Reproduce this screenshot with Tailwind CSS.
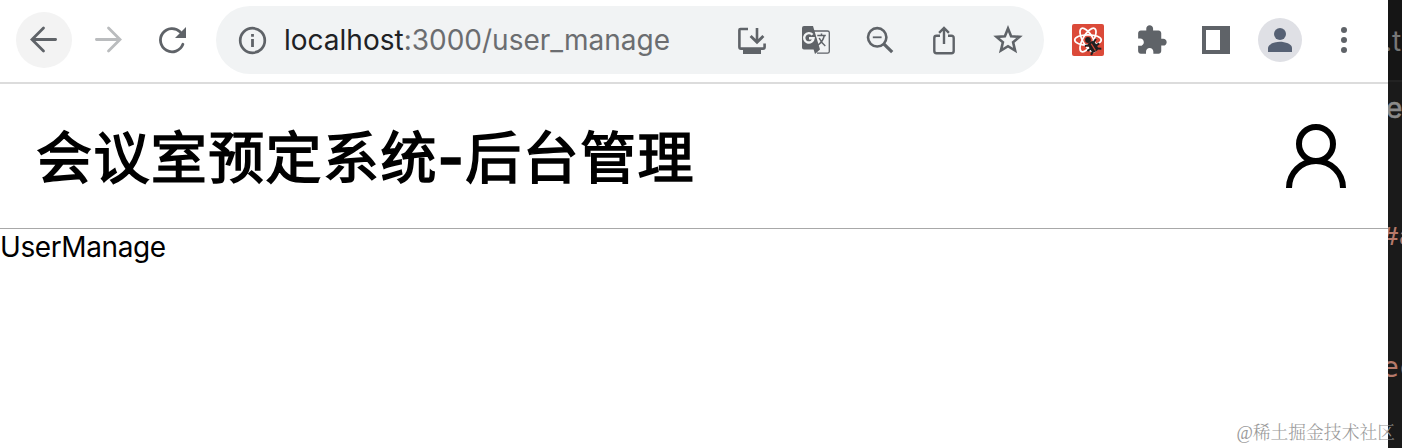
<!DOCTYPE html>
<html lang="zh-CN">
<head>
<meta charset="utf-8">
<title>会议室预定系统-后台管理</title>
<script src="https://cdn.jsdelivr.net/npm/@tailwindcss/browser@4"></script>
</head>
<body class="w-[1402px] h-[448px] overflow-hidden bg-white font-['Inter','Noto_Sans_CJK_SC',sans-serif]">
<div class="relative flex w-full h-full">
  <div class="w-[1388px] h-full shrink-0 flex flex-col">
    <nav class="h-[84px] shrink-0 border-b-2 border-[#dcdcdc] pb-0.5 pl-3 pr-3 flex items-center text-[#5f6368]">
      <div class="w-16 flex justify-center"><div class="size-14 rounded-full bg-[#f3f3f3] flex items-center justify-center">
        <svg class="size-8" viewBox="-16 -16 32 32" fill="none" stroke="currentColor" stroke-width="2.8" stroke-linecap="round"><path d="M11.6-.5H-11M-.5-12-12-.5-.5 11"/></svg>
      </div></div>
      <div class="w-16 flex justify-center text-[#babcbe]">
        <svg class="size-8" viewBox="-16 -16 32 32" fill="none" stroke="currentColor" stroke-width="2.8" stroke-linecap="round"><path d="M-11.6-.5H11M.5-12 12-.5.5 11"/></svg>
      </div>
      <div class="w-16 flex justify-center">
        <svg class="size-8" viewBox="-16 -16 32 32"><path d="M10.9 4.3A11.6 11.6 0 1 1 8.3-8" fill="none" stroke="currentColor" stroke-width="2.8" stroke-linecap="round"/><path d="M14-13V-2H3Z" fill="currentColor"/></svg>
      </div>
      <div class="ml-3 w-[828px] h-[68px] rounded-full bg-[#f1f3f4] flex items-center pl-5 pr-1">
        <svg class="size-8" viewBox="-16 -16 32 32"><circle cx=".5" cy=".5" r="12.3" fill="none" stroke="currentColor" stroke-width="2.7"/><path d="M-.9-6H1.9v2.8H-.9ZM-.9-1H1.9V7H-.9Z" fill="currentColor"/></svg>
        <div class="ml-4 flex-1 whitespace-nowrap text-[28px] leading-8 text-[#6b6d70]"><span class="text-[#202124]">localhost</span>:3000/user_manage</div>
        <div class="w-16 flex justify-center"><svg class="size-8" viewBox="-16 -16 32 32"><path d="M-4-11H-11.5Q-12.6-11-12.6-10V7Q-12.6 8.6-11 8.6H11Q12.6 8.6 12.6 7V3.5" fill="none" stroke="currentColor" stroke-width="2.6"/><path d="M-9 9H9V14H-9ZM3.7-12H6.3V-1L10.4-5 12.4-3 5 4.3-2.4-3-.4-5 3.7-1Z" fill="currentColor"/></svg></div>
        <div class="w-16 flex justify-center"><svg class="size-8" viewBox="-16 -16 32 32"><path d="M-2-9H11.5Q13.3-9 13.3-7.5V11.5Q13.3 13.2 11.5 13.2H1" fill="none" stroke="currentColor" stroke-width="1.3"/><path d="M-12-14H-3L4 9.5-1 14-2.4 9.5H-12Q-14 9.5-14 7.5V-12Q-14-14-12-14Z" fill="currentColor"/><path d="M-3.5-5.2A4.7 4.7 0 1 0-2.4-1.8H-7" fill="none" stroke="#f1f3f4" stroke-width="2.4"/><path d="M1.3-4.5H9.8M5.5-6.5V-4.5M8.3-4.5Q7 1.5 1.5 5.5M3.2-2Q5.5 3 9.3 6" fill="none" stroke="currentColor" stroke-width="1.5"/></svg></div>
        <div class="w-16 flex justify-center"><svg class="size-8" viewBox="-16 -16 32 32" fill="none" stroke="currentColor"><circle cx="-2.8" cy="-2.7" r="9.2" stroke-width="2.6"/><path d="M3.5 3.6 12.2 12.2" stroke-width="3.2"/><path d="M-7.2-2.7H1.6" stroke-width="1.8"/></svg></div>
        <div class="w-16 flex justify-center"><svg class="size-8" viewBox="-16 -16 32 32" fill="none" stroke="currentColor" stroke-width="2.4"><path d="M-4-4.2H-7.5Q-9.7-4.2-9.7-2V11Q-9.7 13.2-7.5 13.2H7.5Q9.7 13.2 9.7 11V-2Q9.7-4.2 7.5-4.2H4M0 4V-11.5M-4.9-7.2 0-12.1 4.9-7.2"/></svg></div>
        <div class="w-16 flex justify-center"><svg class="size-8" viewBox="-16 -16 32 32" fill="none" stroke="currentColor" stroke-width="2.6"><path d="M0-11.5 3.1-3.8 11.5-3.1 5.1 2.3 7.1 10.6 0 6.2-7.1 10.6-5.1 2.3-11.5-3.1-3.1-3.8Z"/></svg></div>
      </div>
      <div class="ml-3 w-16 flex justify-center"><svg class="size-8" viewBox="-16 -16 32 32"><rect x="-16" y="-16" width="32" height="32" rx="2" fill="#db4a39"/><g fill="none" stroke="#fff" stroke-width="1.7"><ellipse rx="13.3" ry="5.2"/><ellipse rx="13.3" ry="5.2" transform="rotate(60)"/><ellipse rx="13.3" ry="5.2" transform="rotate(120)"/></g><g fill="#202020"><circle r="2.9"/><g transform="translate(4.8 6.3) rotate(-32)"><rect x="-3.8" y="-5" width="7.6" height="11" rx="3"/><path d="M-3-3-6.5-4.5M-3 1H-7M-3 4.5-6 6.5M3-3 6.5-4.5M3 1H7M3 4.5 6 6.5" stroke="#202020" stroke-width="2"/><path d="M0-3V5" stroke="#db4a39" stroke-width="1.2"/></g></g></svg></div>
      <div class="w-16 flex justify-center"><svg class="size-8" viewBox="-16 -16 32 32"><path transform="translate(-16.6 -16.2) scale(1.36)" fill="currentColor" d="M20.5 11H19V7c0-1.1-.9-2-2-2h-4V3.5C13 2.12 11.88 1 10.5 1S8 2.12 8 3.5V5H4c-1.1 0-1.99.9-1.99 2v3.8H3.5c1.49 0 2.7 1.21 2.7 2.7s-1.21 2.7-2.7 2.7H2V20c0 1.1.9 2 2 2h3.8v-1.5c0-1.49 1.21-2.7 2.7-2.7 1.49 0 2.7 1.21 2.7 2.7V22H17c1.1 0 2-.9 2-2v-4h1.5c1.38 0 2.5-1.12 2.5-2.5S21.88 11 20.5 11z"/></svg></div>
      <div class="w-16 flex justify-center"><div class="size-7 bg-[#5f6368] p-1"><div class="w-3.5 h-5 bg-white"></div></div></div>
      <div class="w-16 flex justify-center"><svg class="size-11" viewBox="-22 -22 44 44"><circle r="22" fill="#dfe0e5"/><g fill="#566174"><circle cy="-6" r="6"/><path d="M-12 12V8C-12 4-5 1.8 0 1.8S12 4 12 8V12Z"/></g></svg></div>
      <div class="w-16 flex justify-center"><svg class="size-8" viewBox="-16 -16 32 32" fill="currentColor"><circle cy="-10" r="3"/><circle r="3"/><circle cy="10" r="3"/></svg></div>
    </nav>
    <header class="h-[145px] shrink-0 border-b border-[#a8a8a8] pl-9 pr-10 flex items-center justify-between">
      <h1 class="flex items-center pt-1 text-black text-[56px] leading-[72px] tracking-[1.4px] whitespace-nowrap [-webkit-text-stroke:1.6px_#000]"><span>会议室预定系统</span><span class="font-semibold">-</span><span>后台管理</span></h1>
      <svg class="w-16 h-16" viewBox="0 0 64 64" fill="none" stroke="#000" stroke-width="6"><circle cx="32" cy="20" r="17"/><path d="M5 64a27 27 0 0 1 54 0"/></svg>
    </header>
    <main class="flex-1 text-[28px] leading-9 tracking-[-0.4px] text-black">UserManage</main>
  </div>
  <aside class="w-3.5 h-full bg-[#1a1a1a] overflow-hidden flex flex-col text-[28px] leading-8 whitespace-nowrap">
    <div class="h-[82px] shrink-0 border-b-2 border-[#222] pt-[25px] bg-[#151515] text-[#777]"><span class="block -ml-1">.t</span></div>
    <div class="pt-2.5 text-[#8a8a8a] [-webkit-text-stroke:0.6px_#8a8a8a]"><span class="block -ml-0.5">e</span></div>
    <div class="pt-[98px] text-[#b5796a] font-['Liberation_Mono',monospace] font-bold"><span class="block -ml-1.5">#a</span></div>
    <div class="pt-[98px] text-[#b5796a] font-['DejaVu_Sans_Mono',monospace]"><span class="block -ml-1.5">ec</span></div>
  </aside>
  <div class="absolute right-[7px] bottom-[3px] text-[17.8px] leading-6 text-[#999] whitespace-nowrap font-['Liberation_Serif','Noto_Serif_CJK_SC','Noto_Sans_CJK_SC',serif] font-light">@稀土掘金技术社区</div>
</div>
</body>
</html>
